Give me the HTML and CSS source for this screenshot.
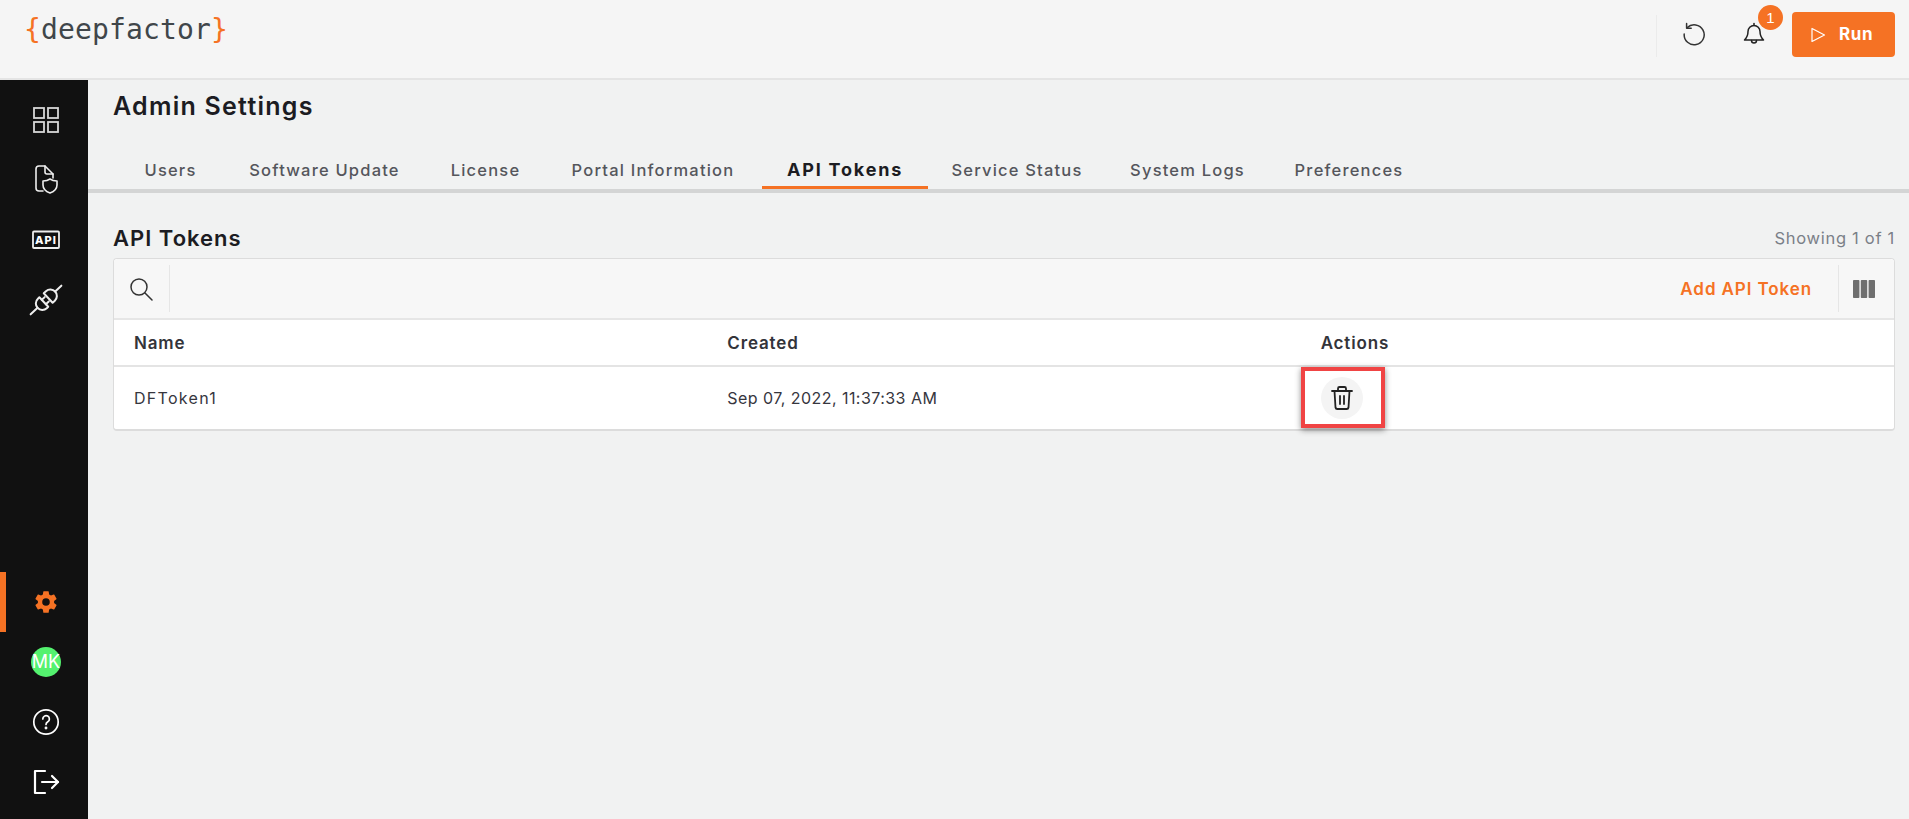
FILE: index.html
```html
<!DOCTYPE html>
<html lang="en">
<head>
<meta charset="utf-8">
<title>Admin Settings</title>
<link rel="stylesheet" href="styles.css">
</head>
<body>
<header class="topbar">
  <div class="logo"><span class="brace">{</span>deepfactor<span class="brace">}</span></div>
  <div class="top-actions">
    <span class="top-divider"></span>
    <button class="icon-btn reload" aria-label="Reload">
      <svg width="24" height="24" viewBox="0 0 24 24" fill="none" stroke="#333" stroke-width="1.5" stroke-linecap="round" stroke-linejoin="round"><path d="M5.2 5.6A10 10 0 1 1 2.2 12"/><path d="M4.6 1.6v4.6h4.6"/></svg>
    </button>
    <button class="icon-btn bell" aria-label="Notifications">
      <svg width="24" height="24" viewBox="0 0 24 24" fill="none" stroke="#222" stroke-width="1.5" stroke-linecap="round" stroke-linejoin="round"><path d="M12 3.500a6 6 0 0 0-6 6c0 5-1.500 6.500-3.500 8.500h19c-2-2-3.500-3.500-3.500-8.500a6 6 0 0 0-6-6z"/><path d="M12 1.500v2"/><path d="M9.500 18.500a2.500 2.500 0 0 0 5 0"/></svg>
      <span class="badge">1</span>
    </button>
    <button class="run-btn">
      <svg width="16" height="16" viewBox="0 0 16 16" fill="none" stroke="#fff" stroke-width="1.2" stroke-linejoin="round"><path d="M2 1.500v13L14.500 8z"/></svg>
      <span>Run</span>
    </button>
  </div>
</header>
<div class="shell">
  <nav class="sidebar">
    <div class="nav-group">
      <a class="nav-item">
        <svg width="28" height="28" viewBox="0 0 28 28" fill="none" stroke="#d8d8d8" stroke-width="1.800"><rect x="2" y="2" width="10" height="10"/><rect x="16" y="2" width="10" height="10"/><rect x="2" y="16" width="10" height="10"/><rect x="16" y="16" width="10" height="10"/></svg>
      </a>
      <a class="nav-item">
        <svg width="28" height="30" viewBox="0 0 28 30" fill="none" stroke="#eee" stroke-width="1.600" stroke-linejoin="round" stroke-linecap="round"><path d="M11 26H7a3 3 0 0 1-3-3V4a3 3 0 0 1 3-3h6l8 8v4"/><path d="M13 1v6a2 2 0 0 0 2 2h6"/><path d="M18 14c2 1.500 4 2 7 2v4c0 4-3 6.500-7 8-4-1.500-7-4-7-8v-4c3 0 5-.5 7-2z"/></svg>
      </a>
      <a class="nav-item">
        <svg width="28" height="20" viewBox="0 0 28 20" fill="none"><rect x="1" y="1.500" width="26" height="16.500" rx="1" stroke="#eee" stroke-width="1.800"/></svg>
        <span class="api-label">API</span>
      </a>
      <a class="nav-item">
        <svg width="40" height="40" viewBox="-20 -20 40 40" fill="none" stroke="#eee" stroke-width="2" stroke-linecap="round" stroke-linejoin="round"><g transform="rotate(-43)"><path d="M-3-6.500h-2a6.500 6.500 0 0 0 0 13h2z"/><path d="M-11.500 0H-21"/><path d="M-3-3H1M-3 3H1"/><path d="M3-6.500h3a6.500 6.500 0 0 1 0 13H3z"/><path d="M12.500 0H21"/></g></svg>
      </a>
    </div>
    <div class="nav-group">
      <a class="nav-item active">
        <svg width="26" height="26" viewBox="0 0 24 24" fill="#f57224"><path d="M19.430 12.980c.04-.32.07-.64.07-.98s-.03-.66-.07-.98l2.110-1.650c.19-.15.24-.42.120-.64l-2-3.460c-.12-.22-.39-.3-.61-.22l-2.490 1c-.52-.4-1.080-.73-1.690-.98l-.38-2.650A.49.49 0 0 0 14 2h-4c-.25 0-.46.180-.49.420l-.38 2.650c-.61.250-1.170.590-1.690.98l-2.490-1c-.23-.09-.49 0-.61.220l-2 3.460c-.13.220-.07.490.12.640l2.110 1.650c-.04.320-.07.650-.07.980s.03.660.07.980l-2.110 1.650c-.19.150-.24.420-.12.640l2 3.460c.12.220.39.300.61.220l2.490-1c.52.400 1.080.730 1.690.980l.38 2.650c.03.240.24.420.49.420h4c.25 0 .46-.180.49-.420l.38-2.650c.61-.250 1.170-.590 1.690-.980l2.490 1c.23.090.49 0 .61-.220l2-3.460c.12-.220.07-.490-.12-.640l-2.110-1.650zM12 15.500a3.500 3.500 0 1 1 0-7 3.500 3.500 0 0 1 0 7z"/></svg>
      </a>
      <a class="nav-item"><span class="avatar">MK</span></a>
      <a class="nav-item">
        <svg width="28" height="28" viewBox="0 0 28 28" fill="none" stroke="#fff" stroke-width="1.700" stroke-linecap="round"><circle cx="14" cy="14" r="12.200"/><path d="M10.800 11a3.300 3.300 0 1 1 5 2.800c-1.100.7-1.800 1.200-1.800 2.700"/><circle cx="14" cy="20" r=".6" fill="#fff"/></svg>
      </a>
      <a class="nav-item">
        <svg width="28" height="26" viewBox="0 0 28 26" fill="none" stroke="#fff" stroke-width="2.200" stroke-linecap="round" stroke-linejoin="round"><path d="M13 2H3v22h10"/><path d="M10 13h16"/><path d="M20 7l6 6-6 6"/></svg>
      </a>
    </div>
  </nav>
  <main class="content">
    <h1 class="page-title">Admin Settings</h1>
    <div class="tabs">
      <a class="tab tab-users">Users</a>
      <a class="tab tab-update">Software Update</a>
      <a class="tab tab-license">License</a>
      <a class="tab tab-portal">Portal Information</a>
      <a class="tab tab-api active">API Tokens</a>
      <a class="tab tab-service">Service Status</a>
      <a class="tab tab-logs">System Logs</a>
      <a class="tab tab-prefs">Preferences</a>
    </div>
    <div class="section-head">
      <h2 class="section-title">API Tokens</h2>
      <span class="showing">Showing 1 of 1</span>
    </div>
    <section class="panel">
      <div class="toolbar">
        <div class="search-cell">
          <svg width="24" height="24" viewBox="0 0 24 24" fill="none" stroke="#333" stroke-width="1.500" stroke-linecap="round"><circle cx="10" cy="10" r="8"/><path d="M16 16l7 7"/></svg>
        </div>
        <a class="add-link">Add API Token</a>
        <div class="columns-cell">
          <svg width="22" height="18" viewBox="0 0 22 18" fill="#6f6f6f"><rect width="6.400" height="18" rx=".8"/><rect x="7.800" width="6.400" height="18" rx=".8"/><rect x="15.600" width="6.400" height="18" rx=".8"/></svg>
        </div>
      </div>
      <div class="grid-row head-row">
        <div>Name</div>
        <div>Created</div>
        <div>Actions</div>
      </div>
      <div class="grid-row body-row">
        <div class="token-name">DFToken1</div>
        <div>Sep 07, 2022, 11:37:33 AM</div>
        <div class="action-cell">
          <span class="trash-btn">
            <svg width="24" height="26" viewBox="0 0 24 26" fill="none" stroke="#222" stroke-width="1.800" stroke-linecap="round" stroke-linejoin="round"><path d="M2 6h20"/><path d="M8 6V3.500A1.500 1.500 0 0 1 9.500 2h5A1.500 1.500 0 0 1 16 3.500V6"/><path d="M4.500 6l1 16.500A1.800 1.800 0 0 0 7.300 24h9.400a1.800 1.800 0 0 0 1.800-1.500l1-16.500"/><path d="M10 11v8M14 11v8"/></svg>
          </span>
          <span class="highlight"></span>
        </div>
      </div>
    </section>
  </main>
</div>
</body>
</html>
```
FILE: styles.css
```css
* { box-sizing: border-box; }
html, body { margin: 0; height: 100%; }
body {
  font-family: Inter, "Open Sans", sans-serif;
  background: #f1f2f2;
  color: #1c1c22;
  display: flex;
  flex-direction: column;
  height: 819px;
  overflow: hidden;
}
.topbar {
  height: 80px;
  flex: none;
  background: #f5f5f5;
  border-bottom: 2px solid #e4e4e4;
  display: flex;
  justify-content: space-between;
  padding: 0 14px 0 24px;
}
.logo {
  font-family: "DejaVu Sans Mono", monospace;
  font-size: 28px;
  line-height: 30px;
  padding-top: 15px;
  color: #40464a;
  letter-spacing: .15px;
}
.brace { color: #f57224; }
.top-actions {
  display: flex;
  align-items: flex-start;
}
.top-divider {
  width: 1px;
  height: 42px;
  margin-top: 15px;
  background: #ebebeb;
}
.icon-btn {
  position: relative;
  border: 0;
  background: none;
  padding: 0;
  margin-top: 22px;
  width: 24px;
  height: 24px;
}
.reload { margin-left: 25px; }
.bell { margin-left: 36px; }
.badge {
  position: absolute;
  left: 16px;
  top: -17px;
  width: 25px;
  height: 25px;
  border-radius: 50%;
  background: #f57224;
  color: #fff;
  font-size: 15px;
  line-height: 25px;
  text-align: center;
}
.run-btn {
  margin-left: 26px;
  margin-top: 12px;
  width: 103px;
  height: 45px;
  border: 0;
  border-radius: 4px;
  background: #f57224;
  color: #fff;
  font: 700 17px/45px Inter, sans-serif;
  letter-spacing: .6px;
  display: flex;
  align-items: center;
  gap: 13px;
  padding: 0 0 0 18px;
}
.shell {
  flex: 1;
  display: flex;
  min-height: 0;
}
.sidebar {
  width: 88px;
  flex: none;
  background: #111;
  display: flex;
  flex-direction: column;
  justify-content: space-between;
  padding: 10px 0 7px;
}
.nav-item {
  position: relative;
  height: 60px;
  display: flex;
  align-items: center;
  justify-content: center;
  padding-left: 4px;
}
.nav-item.active::before {
  content: "";
  position: absolute;
  left: 0;
  top: 0;
  width: 6px;
  height: 60px;
  background: #f57224;
}
.api-label {
  position: absolute;
  left: 0;
  right: 0;
  top: 22px;
  padding-left: 4px;
  text-align: center;
  color: #fff;
  font: 800 11px/16px Inter, sans-serif;
  letter-spacing: 1px;
}
.avatar {
  width: 30px;
  height: 30px;
  border-radius: 50%;
  background: #54f26f;
  color: #fff;
  font-size: 18px;
  line-height: 30px;
  text-align: center;
  white-space: nowrap;
  display: flex;
  justify-content: center;
}
.content {
  flex: 1;
  min-width: 0;
  padding: 0 14px 0 25px;
}
.page-title {
  margin: 0;
  font-size: 25px;
  font-weight: 600;
  line-height: 30px;
  padding-top: 11px;
  letter-spacing: 1.25px;
  height: 41px;
}
.tabs {
  height: 72px;
  margin: 0 -14px 0 -25px;
  padding: 30px 0 0 31px;
  display: flex;
  border-bottom: 4px solid #d4d5d5;
}
.tab {
  height: 38px;
  padding-top: 9px;
  font-size: 16.500px;
  line-height: 20px;
  color: #55565c;
  letter-spacing: 1.200px;
  font-weight: 500;
  text-align: center;
  white-space: nowrap;
  margin-bottom: -1px;
}
.tab-users { width: 103px; }
.tab-update { width: 205px; }
.tab-license { width: 117px; }
.tab-portal { width: 218px; }
.tab-api { width: 166px; }
.tab-service { width: 178px; }
.tab-logs { width: 163px; }
.tab-prefs { width: 160px; }
.tab.active {
  color: #1c1c22;
  font-size: 18px;
  font-weight: 700;
  letter-spacing: 1.800px;
  border-bottom: 3px solid #f57224;
}
.section-head {
  height: 65px;
  padding-top: 31px;
  display: flex;
  justify-content: space-between;
  align-items: flex-start;
}
.section-title {
  margin: 0;
  font-size: 22px;
  line-height: 28px;
  font-weight: 600;
  letter-spacing: 1px;
}
.showing {
  color: #7b8088;
  font-size: 16.500px;
  line-height: 28px;
  letter-spacing: .7px;
}
.panel {
  background: #fff;
  border: 1px solid #dcdcdc;
  border-bottom-width: 2px;
  border-radius: 4px;
}
.toolbar {
  height: 61px;
  background: #f7f7f7;
  border-bottom: 2px solid #e6e6e6;
  border-radius: 4px 4px 0 0;
  display: flex;
  align-items: center;
  justify-content: space-between;
}
.search-cell {
  width: 56px;
  height: 47px;
  border-right: 1px solid #e6e6e6;
  display: flex;
  align-items: center;
  padding-left: 15px;
}
.add-link {
  margin-left: auto;
  color: #f57224;
  font-size: 17px;
  font-weight: 600;
  letter-spacing: .9px;
}
.columns-cell {
  width: 56px;
  height: 47px;
  margin-left: 26px;
  border-left: 1px solid #e6e6e6;
  display: flex;
  align-items: center;
  padding-left: 14px;
}
.grid-row {
  display: grid;
  grid-template-columns: 1fr 1fr 1fr;
  align-items: center;
}
.grid-row > div { padding-left: 20px; }
.head-row {
  height: 47px;
  border-bottom: 2px solid #e4e4e4;
  font-size: 17px;
  font-weight: 600;
  color: #33343a;
  letter-spacing: .85px;
}
.body-row {
  height: 62px;
  font-size: 16px;
  color: #36363e;
  letter-spacing: .45px;
}
.grid-row > .token-name { letter-spacing: 1.300px; }
.grid-row > .action-cell {
  position: relative;
  height: 62px;
  display: flex;
  align-items: center;
}
.trash-btn {
  width: 42px;
  height: 42px;
  border-radius: 50%;
  background: #f4f4f4;
  display: flex;
  align-items: center;
  justify-content: center;
}
.highlight {
  position: absolute;
  left: 0;
  top: 0;
  width: 84px;
  height: 61px;
  border: 4px solid #f04444;
  box-shadow: 0 2px 6px rgba(0,0,0,.45);
}
```
